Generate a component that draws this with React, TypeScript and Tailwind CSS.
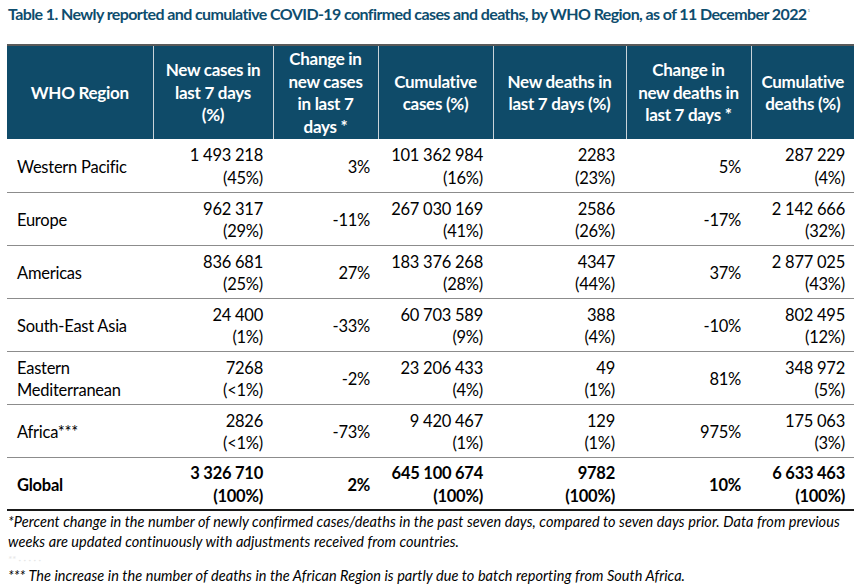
import React from "react";

type Row = {
  region: string[];
  newCases: [string, string];
  changeCases: string;
  cumCases: [string, string];
  newDeaths: [string, string];
  changeDeaths: string;
  cumDeaths: [string, string];
};

const rows: Row[] = [
  { region: ["Western Pacific"], newCases: ["1 493 218", "(45%)"], changeCases: "3%", cumCases: ["101 362 984", "(16%)"], newDeaths: ["2283", "(23%)"], changeDeaths: "5%", cumDeaths: ["287 229", "(4%)"] },
  { region: ["Europe"], newCases: ["962 317", "(29%)"], changeCases: "-11%", cumCases: ["267 030 169", "(41%)"], newDeaths: ["2586", "(26%)"], changeDeaths: "-17%", cumDeaths: ["2 142 666", "(32%)"] },
  { region: ["Americas"], newCases: ["836 681", "(25%)"], changeCases: "27%", cumCases: ["183 376 268", "(28%)"], newDeaths: ["4347", "(44%)"], changeDeaths: "37%", cumDeaths: ["2 877 025", "(43%)"] },
  { region: ["South-East Asia"], newCases: ["24 400", "(1%)"], changeCases: "-33%", cumCases: ["60 703 589", "(9%)"], newDeaths: ["388", "(4%)"], changeDeaths: "-10%", cumDeaths: ["802 495", "(12%)"] },
  { region: ["Eastern", "Mediterranean"], newCases: ["7268", "(<1%)"], changeCases: "-2%", cumCases: ["23 206 433", "(4%)"], newDeaths: ["49", "(1%)"], changeDeaths: "81%", cumDeaths: ["348 972", "(5%)"] },
  { region: ["Africa***"], newCases: ["2826", "(<1%)"], changeCases: "-73%", cumCases: ["9 420 467", "(1%)"], newDeaths: ["129", "(1%)"], changeDeaths: "975%", cumDeaths: ["175 063", "(3%)"] },
];

const global: Row = {
  region: ["Global"],
  newCases: ["3 326 710", "(100%)"],
  changeCases: "2%",
  cumCases: ["645 100 674", "(100%)"],
  newDeaths: ["9782", "(100%)"],
  changeDeaths: "10%",
  cumDeaths: ["6 633 463", "(100%)"],
};

const headers: { lines: string[]; w: string }[] = [
  { lines: ["WHO Region"], w: "w-[146px]" },
  { lines: ["New cases in", "last 7 days", "(%)"], w: "w-[120px]" },
  { lines: ["Change in", "new cases", "in last 7", "days *"], w: "w-[105px]" },
  { lines: ["Cumulative", "cases (%)"], w: "w-[115px]" },
  { lines: ["New deaths in", "last 7 days (%)"], w: "w-[133px]" },
  { lines: ["Change in", "new deaths in", "last 7 days *"], w: "w-[125px]" },
  { lines: ["Cumulative", "deaths (%)"], w: "w-[103px]" },
];

function Stack({ lines }: { lines: string[] }) {
  return (
    <>
      {lines.map((l) => (
        <div key={l}>{l}</div>
      ))}
    </>
  );
}

function DataRow({ r, bold, last }: { r: Row; bold?: boolean; last?: boolean }) {
  const border = last ? "border-b-2 border-[#1a1a1a]" : "border-b border-[#8c8c8c]";
  const td = `h-[53px] pt-[3px] align-middle text-right whitespace-nowrap ${border}`;
  return (
    <tr className={bold ? "font-bold" : ""}>
      <td className={`h-[53px] pt-[3px] align-middle pl-[10px] text-left ${border}`}>
        <Stack lines={r.region} />
      </td>
      <td className={`${td} pr-[10px]`}><Stack lines={r.newCases} /></td>
      <td className={`${td} pr-[8px]`}>{r.changeCases}</td>
      <td className={`${td} pr-[10px]`}><Stack lines={r.cumCases} /></td>
      <td className={`${td} pr-[11px]`}><Stack lines={r.newDeaths} /></td>
      <td className={`${td} pr-[10px]`}>{r.changeDeaths}</td>
      <td className={`${td} pr-[9px]`}><Stack lines={r.cumDeaths} /></td>
    </tr>
  );
}

export default function App() {
  return (
    <div className="w-[856px] h-[587px] bg-white overflow-hidden font-['Lato',sans-serif] text-black">
      <h1 className="pl-[8px] pt-[4px] h-[44px] text-[16px] leading-[20px] font-bold text-[#0e4d6e] tracking-[-0.6px] whitespace-nowrap">
        Table 1. Newly reported and cumulative COVID-19 confirmed cases and deaths, by WHO Region, as of 11 December 2022
        <sup className="ml-[1px] text-[8px] font-normal text-[#7f97a6] tracking-normal">¹</sup>
      </h1>
      <div className="px-[7px]">
        <table className="w-[846px] border-collapse table-fixed text-[16.5px] leading-[22.5px] tracking-[-0.25px]">
          <thead>
            <tr className="bg-[#0f4b69] text-white border-t-2 border-[#5a5a5a]">
              {headers.map((h, i) => (
                <th
                  key={i}
                  className={`${h.w} h-[94px] pt-[1px] align-middle text-center font-bold text-[17px] tracking-[-0.3px] px-0 whitespace-nowrap ${i > 0 ? "border-l border-[#c9d3d9]" : ""}`}
                >
                  <Stack lines={h.lines} />
                </th>
              ))}
            </tr>
          </thead>
          <tbody>
            {rows.map((r) => (
              <DataRow key={r.region.join(" ")} r={r} />
            ))}
            <DataRow r={global} bold last />
          </tbody>
        </table>
        <div className="pl-[1px] pt-[1px] text-[14.5px] leading-[20px] italic tracking-[0.06px] whitespace-nowrap">
          <p>
            *Percent change in the number of newly confirmed cases/deaths in the past seven days, compared to seven days prior. Data from previous
            <br />
            weeks are updated continuously with adjustments received from countries.
          </p>
          <p className="h-[14px] leading-[14px] text-[#e6e6e6] text-[10px]">** ·  ·  ·   ·   ·</p>
          <p>*** The increase in the number of deaths in the African Region is partly due to batch reporting from South Africa.</p>
        </div>
      </div>
      <div className="mt-[1px] h-[4px] bg-[#8e8e84]" />
    </div>
  );
}
